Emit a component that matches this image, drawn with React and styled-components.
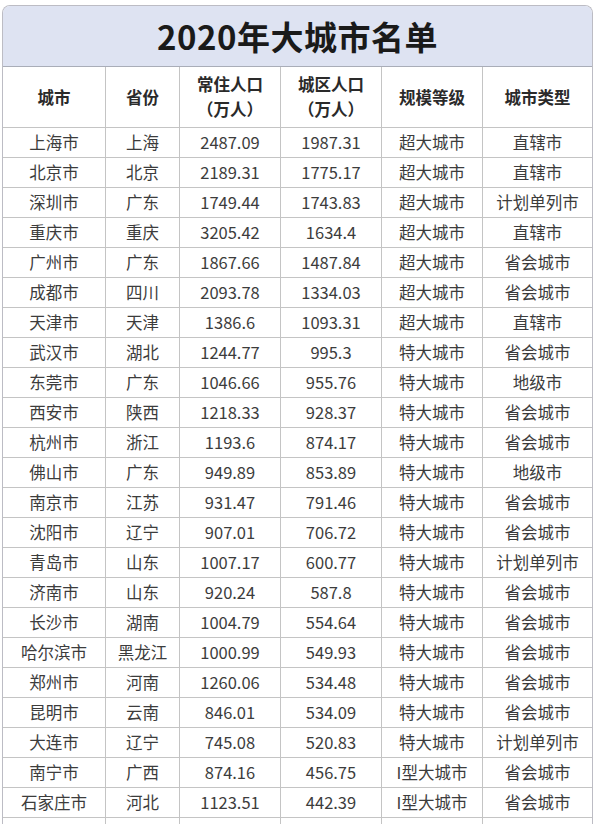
import React from 'react';
import styled, { createGlobalStyle } from 'styled-components';

const GlobalStyle = createGlobalStyle`
  html, body {
    margin: 0;
    padding: 0;
    background: #ffffff;
  }
  body {
    font-family: "Noto Sans CJK SC", "Noto Sans", sans-serif;
  }
`;

const Page = styled.div`
  padding: 5px 0 0 2px;
  width: 591px;
  height: 819px;
  overflow: hidden;
`;

const Sheet = styled.div`
  border: 1px solid #bcbcc4;
  border-bottom: none;
  border-radius: 8px 8px 0 0;
  overflow: hidden;
`;

const Title = styled.h1`
  margin: 0;
  height: 60px;
  display: flex;
  align-items: center;
  justify-content: center;
  background: #dee3f2;
  border-bottom: 1px solid #a9adb8;
  font-size: 33px;
  font-weight: 700;
  color: #1a1a1a;
  letter-spacing: 0.5px;
`;

const Grid = styled.div`
  display: grid;
  grid-template-columns: 103px 74px 101px 101px 101px 1fr;
`;

const Cell = styled.div`
  height: ${p => (p.$head ? 60 : 29)}px;
  display: flex;
  flex-direction: column;
  align-items: center;
  justify-content: center;
  border-bottom: 1px solid #c4c4c4;
  border-right: ${p => (p.$last ? 'none' : '1px solid #c4c4c4')};
  font-size: 16.5px;
  font-weight: ${p => (p.$head ? 700 : 400)};
  color: ${p => (p.$head ? '#2a2a2a' : '#3c3c3c')};
  line-height: ${p => (p.$head ? 1.5 : 1.35)};
  white-space: nowrap;
`;

const headers = [
  ['城市'],
  ['省份'],
  ['常住人口', '（万人）'],
  ['城区人口', '（万人）'],
  ['规模等级'],
  ['城市类型'],
];

const rows = [
  ['上海市', '上海', '2487.09', '1987.31', '超大城市', '直辖市'],
  ['北京市', '北京', '2189.31', '1775.17', '超大城市', '直辖市'],
  ['深圳市', '广东', '1749.44', '1743.83', '超大城市', '计划单列市'],
  ['重庆市', '重庆', '3205.42', '1634.4', '超大城市', '直辖市'],
  ['广州市', '广东', '1867.66', '1487.84', '超大城市', '省会城市'],
  ['成都市', '四川', '2093.78', '1334.03', '超大城市', '省会城市'],
  ['天津市', '天津', '1386.6', '1093.31', '超大城市', '直辖市'],
  ['武汉市', '湖北', '1244.77', '995.3', '特大城市', '省会城市'],
  ['东莞市', '广东', '1046.66', '955.76', '特大城市', '地级市'],
  ['西安市', '陕西', '1218.33', '928.37', '特大城市', '省会城市'],
  ['杭州市', '浙江', '1193.6', '874.17', '特大城市', '省会城市'],
  ['佛山市', '广东', '949.89', '853.89', '特大城市', '地级市'],
  ['南京市', '江苏', '931.47', '791.46', '特大城市', '省会城市'],
  ['沈阳市', '辽宁', '907.01', '706.72', '特大城市', '省会城市'],
  ['青岛市', '山东', '1007.17', '600.77', '特大城市', '计划单列市'],
  ['济南市', '山东', '920.24', '587.8', '特大城市', '省会城市'],
  ['长沙市', '湖南', '1004.79', '554.64', '特大城市', '省会城市'],
  ['哈尔滨市', '黑龙江', '1000.99', '549.93', '特大城市', '省会城市'],
  ['郑州市', '河南', '1260.06', '534.48', '特大城市', '省会城市'],
  ['昆明市', '云南', '846.01', '534.09', '特大城市', '省会城市'],
  ['大连市', '辽宁', '745.08', '520.83', '特大城市', '计划单列市'],
  ['南宁市', '广西', '874.16', '456.75', 'I型大城市', '省会城市'],
  ['石家庄市', '河北', '1123.51', '442.39', 'I型大城市', '省会城市'],
  ['', '', '', '', '', ''],
];

export default function App() {
  return (
    <>
      <GlobalStyle />
      <Page>
        <Sheet>
          <Title>2020年大城市名单</Title>
          <Grid>
            {headers.map((lines, i) => (
              <Cell key={'h' + i} $head $last={i === 5}>
                {lines.map(l => <span key={l}>{l}</span>)}
              </Cell>
            ))}
            {rows.map((row, r) =>
              row.map((v, i) => (
                <Cell key={r + '-' + i} $last={i === 5}>{v}</Cell>
              ))
            )}
          </Grid>
        </Sheet>
      </Page>
    </>
  );
}
